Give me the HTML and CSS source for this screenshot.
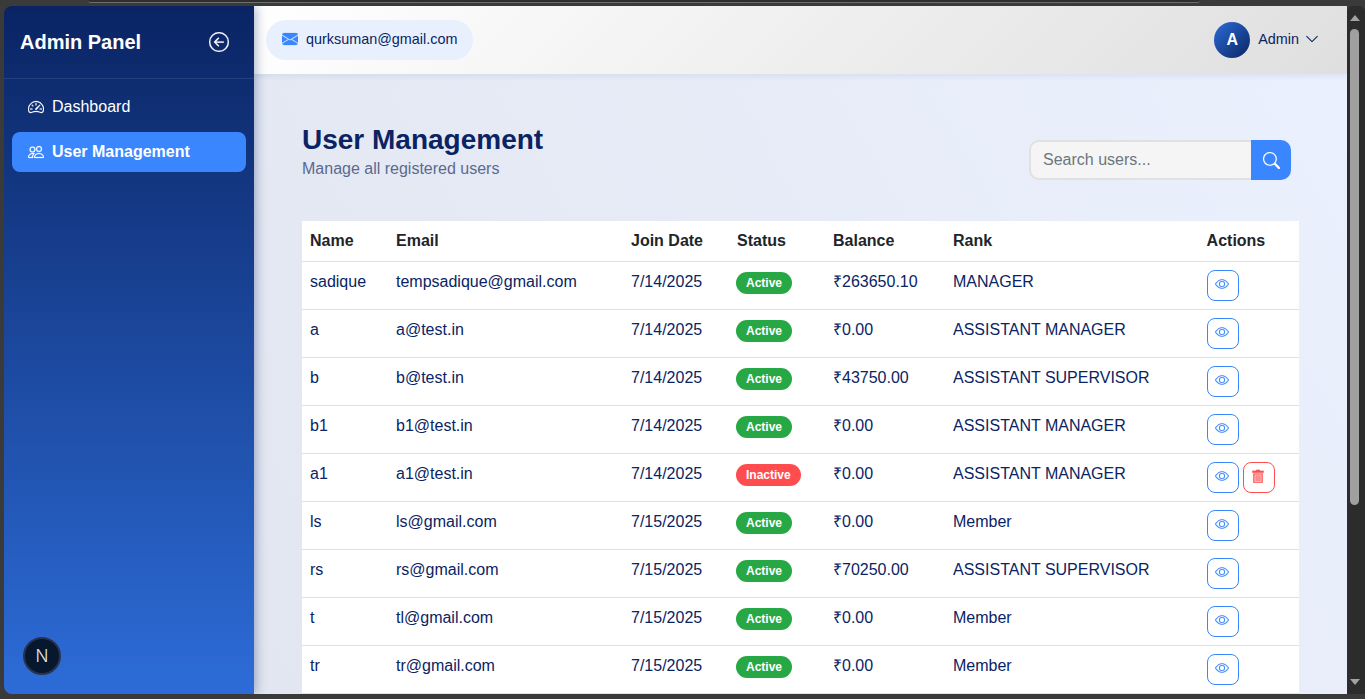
FILE: index.html
```html
<!DOCTYPE html>
<html lang="en">
<head>
    <meta charset="UTF-8">
    <meta name="viewport" content="width=device-width, initial-scale=1.0">
    <title>Admin Panel - User Management</title>
    <link rel="stylesheet" href="styles.css">
</head>
<body>

    <svg class="icon-defs" aria-hidden="true">
        <symbol id="i-back" viewBox="0 0 16 16"><path d="M1 8a7 7 0 1 0 14 0A7 7 0 0 0 1 8m15 0A8 8 0 1 1 0 8a8 8 0 0 1 16 0m-4.5-.5a.5.5 0 0 1 0 1H5.707l2.147 2.146a.5.5 0 0 1-.708.708l-3-3a.5.5 0 0 1 0-.708l3-3a.5.5 0 1 1 .708.708L5.707 7.5z"/></symbol>
        <symbol id="i-gauge" viewBox="0 0 16 16"><path d="M8 4a.5.5 0 0 1 .5.5V6a.5.5 0 0 1-1 0V4.5A.5.5 0 0 1 8 4M3.732 5.732a.5.5 0 0 1 .707 0l.915.914a.5.5 0 1 1-.708.708l-.914-.915a.5.5 0 0 1 0-.707M2 10a.5.5 0 0 1 .5-.5h1.586a.5.5 0 0 1 0 1H2.5A.5.5 0 0 1 2 10m9.5 0a.5.5 0 0 1 .5-.5h1.5a.5.5 0 0 1 0 1H12a.5.5 0 0 1-.5-.5m.754-4.246a.39.39 0 0 0-.527-.02L7.547 9.31a.91.91 0 1 0 1.302 1.258l3.434-4.297a.39.39 0 0 0-.029-.518z"/><path d="M0 10a8 8 0 1 1 15.547 2.661c-.442 1.253-1.845 1.602-2.932 1.25C11.309 13.488 9.475 13 8 13c-1.474 0-3.31.488-4.615.911-1.087.352-2.49.003-2.932-1.25A8 8 0 0 1 0 10m8-7a7 7 0 0 0-6.603 9.329c.203.575.923.876 1.68.63C4.397 12.533 6.358 12 8 12s3.604.532 4.923.96c.757.245 1.477-.056 1.68-.631A7 7 0 0 0 8 3"/></symbol>
        <symbol id="i-people" viewBox="0 0 16 16"><path d="M15 14s1 0 1-1-1-4-5-4-5 3-5 4 1 1 1 1zm-7.978-1L7 12.996c.001-.264.167-1.03.76-1.72C8.312 10.629 9.282 10 11 10c1.717 0 2.687.63 3.24 1.276.593.69.758 1.457.76 1.72l-.008.002-.014.002zM11 7a2 2 0 1 0 0-4 2 2 0 0 0 0 4m3-2a3 3 0 1 1-6 0 3 3 0 0 1 6 0M6.936 9.28a6 6 0 0 0-1.23-.247A7 7 0 0 0 5 9c-4 0-5 3-5 4q0 1 1 1h4.216A2.24 2.24 0 0 1 5 13c0-1.01.377-2.042 1.09-2.904.243-.294.526-.569.846-.816M4.92 10A5.5 5.5 0 0 0 4 13H1c0-.26.164-1.03.76-1.724.545-.636 1.492-1.256 3.16-1.275ZM1.5 5.5a3 3 0 1 1 6 0 3 3 0 0 1-6 0m3-2a2 2 0 1 0 0 4 2 2 0 0 0 0-4"/></symbol>
        <symbol id="i-mail" viewBox="0 0 16 16"><path d="M.05 3.555A2 2 0 0 1 2 2h12a2 2 0 0 1 1.95 1.555L8 8.414zM0 4.697v7.104l5.803-3.558zM6.761 8.83l-6.57 4.027A2 2 0 0 0 2 14h12a2 2 0 0 0 1.808-1.144l-6.57-4.027L8 9.586zm3.436-.586L16 11.801V4.697z"/></symbol>
        <symbol id="i-chevron" viewBox="0 0 16 16"><path d="M1.646 4.646a.5.5 0 0 1 .708 0L8 10.293l5.646-5.647a.5.5 0 0 1 .708.708l-6 6a.5.5 0 0 1-.708 0l-6-6a.5.5 0 0 1 0-.708"/></symbol>
        <symbol id="i-search" viewBox="0 0 16 16"><path d="M11.742 10.344a6.5 6.5 0 1 0-1.397 1.398h-.001q.044.06.098.115l3.85 3.85a1 1 0 0 0 1.415-1.414l-3.85-3.85a1 1 0 0 0-.115-.1zM12 6.5a5.5 5.5 0 1 1-11 0 5.5 5.5 0 0 1 11 0"/></symbol>
        <symbol id="i-eye" viewBox="0 0 16 16"><path d="M16 8s-3-5.5-8-5.5S0 8 0 8s3 5.5 8 5.5S16 8 16 8M1.173 8a13 13 0 0 1 1.66-2.043C4.12 4.668 5.88 3.5 8 3.5s3.879 1.168 5.168 2.457A13 13 0 0 1 14.828 8q-.086.13-.195.288c-.335.48-.83 1.12-1.465 1.755C11.879 11.332 10.119 12.5 8 12.5s-3.879-1.168-5.168-2.457A13 13 0 0 1 1.172 8z"/><path d="M8 5.5a2.5 2.5 0 1 0 0 5 2.5 2.5 0 0 0 0-5M4.5 8a3.5 3.5 0 1 1 7 0 3.5 3.5 0 0 1-7 0"/></symbol>
        <symbol id="i-trash" viewBox="0 0 16 16"><path d="M1.5 2H6V.8h4V2h4.5v2.2h-13z"/><path fill-rule="evenodd" d="M2.6 5h10.8v10.8H2.6zM4 6.2v8.4h8V6.2z"/><path d="M5.2 7h1.2v6.6H5.2zM7.4 7h1.2v6.6H7.4zM9.6 7h1.2v6.6H9.6z"/></symbol>
    </svg>

    <div class="frame-tab"></div>

    <div class="window">
        <div class="app">
            <aside class="sidebar">
                <div class="sidebar-head">
                    <h2>Admin Panel</h2>
                    <button type="button" class="collapse-btn"><svg class="icon"><use href="#i-back"/></svg></button>
                </div>
                <nav class="side-nav">
                    <a href="#" class="side-link"><svg class="icon"><use href="#i-gauge"/></svg>Dashboard</a>
                    <a href="#" class="side-link active"><svg class="icon"><use href="#i-people"/></svg>User Management</a>
                </nav>
                <div class="dev-badge">N</div>
            </aside>

            <div class="content">
                <header class="topbar">
                    <div class="mail-pill"><svg class="icon"><use href="#i-mail"/></svg>qurksuman@gmail.com</div>
                    <div class="profile">
                        <span class="avatar">A</span>
                        <span>Admin</span>
                        <svg class="icon chevron"><use href="#i-chevron"/></svg>
                    </div>
                </header>

                <main class="page">
                    <div class="page-head">
                        <div class="page-title">
                            <h1>User Management</h1>
                            <p>Manage all registered users</p>
                        </div>
                        <form class="search">
                            <input type="text" placeholder="Search users...">
                            <button type="button"><svg class="icon"><use href="#i-search"/></svg></button>
                        </form>
                    </div>

                    <table class="users">
                        <colgroup>
                            <col class="c-name"><col class="c-email"><col class="c-date"><col class="c-status"><col class="c-balance"><col class="c-rank"><col class="c-actions">
                        </colgroup>
                        <thead>
                            <tr><th>Name</th><th>Email</th><th>Join Date</th><th>Status</th><th>Balance</th><th>Rank</th><th>Actions</th></tr>
                        </thead>
                        <tbody>
                            <tr>
                                <td>sadique</td><td>tempsadique@gmail.com</td><td>7/14/2025</td>
                                <td><span class="badge">Active</span></td><td>₹263650.10</td><td>MANAGER</td>
                                <td><div class="actions"><button type="button" class="act"><svg class="icon"><use href="#i-eye"/></svg></button></div></td>
                            </tr>
                            <tr>
                                <td>a</td><td>a@test.in</td><td>7/14/2025</td>
                                <td><span class="badge">Active</span></td><td>₹0.00</td><td>ASSISTANT MANAGER</td>
                                <td><div class="actions"><button type="button" class="act"><svg class="icon"><use href="#i-eye"/></svg></button></div></td>
                            </tr>
                            <tr>
                                <td>b</td><td>b@test.in</td><td>7/14/2025</td>
                                <td><span class="badge">Active</span></td><td>₹43750.00</td><td>ASSISTANT SUPERVISOR</td>
                                <td><div class="actions"><button type="button" class="act"><svg class="icon"><use href="#i-eye"/></svg></button></div></td>
                            </tr>
                            <tr>
                                <td>b1</td><td>b1@test.in</td><td>7/14/2025</td>
                                <td><span class="badge">Active</span></td><td>₹0.00</td><td>ASSISTANT MANAGER</td>
                                <td><div class="actions"><button type="button" class="act"><svg class="icon"><use href="#i-eye"/></svg></button></div></td>
                            </tr>
                            <tr>
                                <td>a1</td><td>a1@test.in</td><td>7/14/2025</td>
                                <td><span class="badge off">Inactive</span></td><td>₹0.00</td><td>ASSISTANT MANAGER</td>
                                <td>
                                    <div class="actions">
                                        <button type="button" class="act"><svg class="icon"><use href="#i-eye"/></svg></button>
                                        <button type="button" class="act del"><svg class="icon"><use href="#i-trash"/></svg></button>
                                    </div>
                                </td>
                            </tr>
                            <tr>
                                <td>ls</td><td>ls@gmail.com</td><td>7/15/2025</td>
                                <td><span class="badge">Active</span></td><td>₹0.00</td><td>Member</td>
                                <td><div class="actions"><button type="button" class="act"><svg class="icon"><use href="#i-eye"/></svg></button></div></td>
                            </tr>
                            <tr>
                                <td>rs</td><td>rs@gmail.com</td><td>7/15/2025</td>
                                <td><span class="badge">Active</span></td><td>₹70250.00</td><td>ASSISTANT SUPERVISOR</td>
                                <td><div class="actions"><button type="button" class="act"><svg class="icon"><use href="#i-eye"/></svg></button></div></td>
                            </tr>
                            <tr>
                                <td>t</td><td>tl@gmail.com</td><td>7/15/2025</td>
                                <td><span class="badge">Active</span></td><td>₹0.00</td><td>Member</td>
                                <td><div class="actions"><button type="button" class="act"><svg class="icon"><use href="#i-eye"/></svg></button></div></td>
                            </tr>
                            <tr>
                                <td>tr</td><td>tr@gmail.com</td><td>7/15/2025</td>
                                <td><span class="badge">Active</span></td><td>₹0.00</td><td>Member</td>
                                <td><div class="actions"><button type="button" class="act"><svg class="icon"><use href="#i-eye"/></svg></button></div></td>
                            </tr>
                        </tbody>
                    </table>
                </main>
            </div>
        </div>

        <div class="scrollbar">
            <span class="arrow up"></span>
            <span class="track"><span class="thumb"></span></span>
            <span class="arrow down"></span>
        </div>
    </div>

</body>
</html>
```

FILE: styles.css
```css
* {
    box-sizing: border-box;
}
html, body {
    height: 100%;
}
body {
    margin: 0;
    padding: 6px 0 5px 4px;
    overflow: hidden;
    background: #3a3a3a;
    font-family: "Liberation Sans", Arial, sans-serif;
    font-size: 16px;
    color: #0a2463;
}
.icon-defs {
    position: absolute;
    width: 0;
    height: 0;
}
.icon {
    width: 16px;
    height: 16px;
    fill: currentColor;
    stroke: currentColor;
    stroke-width: 0.2;
    flex-shrink: 0;
}
.frame-tab {
    position: absolute;
    top: 0;
    left: 88px;
    width: 1112px;
    height: 3px;
    border-bottom: 1px solid #6e6e6e;
    border-radius: 0 0 4px 4px;
    background: #2e2e2e;
}
.window {
    display: flex;
    height: 100%;
}
.app {
    flex: 1;
    display: flex;
    min-width: 0;
    overflow: hidden;
    border-top-left-radius: 8px;
    border-bottom-left-radius: 8px;
}

/* sidebar */
.sidebar {
    position: relative;
    width: 250px;
    flex-shrink: 0;
    z-index: 2;
    background: linear-gradient(180deg, #0a2463 0%, #2d6cd8 100%);
    box-shadow: 2px 0 10px rgba(10, 36, 99, 0.35);
    color: #fff;
}
.sidebar-head {
    display: flex;
    align-items: center;
    justify-content: space-between;
    height: 73px;
    padding: 0 25px 0 16px;
    border-bottom: 1px solid rgba(255, 255, 255, 0.1);
}
.sidebar-head h2 {
    margin: 0;
    font-size: 20px;
    font-weight: bold;
}
.collapse-btn {
    display: flex;
    padding: 0;
    border: 0;
    background: none;
    color: #fff;
}
.collapse-btn .icon {
    width: 20px;
    height: 20px;
}
.side-nav {
    display: flex;
    flex-direction: column;
    gap: 5px;
    padding: 8px 8px;
}
.side-link {
    display: flex;
    align-items: center;
    gap: 8px;
    height: 40px;
    padding: 0 16px;
    border-radius: 8px;
    color: #fff;
    text-decoration: none;
}
.side-link.active {
    background: #3a86ff;
    font-weight: bold;
}
.dev-badge {
    position: absolute;
    left: 19px;
    bottom: 19px;
    width: 38px;
    height: 38px;
    display: flex;
    align-items: center;
    justify-content: center;
    border: 2px solid #27344d;
    border-radius: 50%;
    background: #07172e;
    color: #e8e8e8;
    font-family: Inter, "Liberation Sans", sans-serif;
    font-size: 17px;
    font-weight: 300;
}

/* top bar */
.content {
    flex: 1;
    min-width: 0;
    display: flex;
    flex-direction: column;
}
.topbar {
    position: relative;
    z-index: 1;
    display: flex;
    align-items: center;
    justify-content: space-between;
    height: 68px;
    flex-shrink: 0;
    padding: 0 28px 0 12px;
    background: linear-gradient(135deg, #ffffff 0%, #dfdfdf 100%);
    box-shadow: 0 2px 6px rgba(10, 36, 99, 0.08);
}
.mail-pill {
    display: flex;
    align-items: center;
    gap: 8px;
    height: 40px;
    padding: 0 16px 2px;
    border-radius: 20px;
    background: #e8f0fe;
    font-size: 14.4px;
}
.mail-pill .icon {
    color: #3a86ff;
}
.profile {
    display: flex;
    align-items: center;
    gap: 8px;
    font-size: 14.4px;
}
.avatar {
    width: 36px;
    height: 36px;
    display: flex;
    align-items: center;
    justify-content: center;
    border-radius: 50%;
    background: linear-gradient(135deg, #2d6cd8, #0a2463);
    color: #fff;
    font-size: 16px;
    font-weight: bold;
}
.profile span:nth-child(2) {
    margin-bottom: 2px;
}
.chevron {
    width: 14px;
    height: 14px;
    margin: 0 0 2px -2px;
}

/* page */
.page {
    flex: 1;
    min-height: 0;
    overflow: hidden;
    padding: 48px 48px 0;
    background: linear-gradient(60deg, #e2e6f0 0%, #eaf0fd 100%);
}
.page-head {
    display: flex;
    align-items: flex-end;
    justify-content: space-between;
    height: 58px;
    margin-bottom: 41px;
    padding-right: 8px;
}
.page-title {
    align-self: flex-start;
    padding-top: 2px;
}
.page-head h1 {
    margin: 0 0 4px;
    font-size: 28px;
    line-height: 32px;
    font-weight: bold;
}
.page-head p {
    margin: 0;
    line-height: 18px;
    color: #5a6a90;
}
.search {
    display: flex;
    width: 262px;
    height: 40px;
}
.search input {
    flex: 1;
    min-width: 0;
    padding: 0 12px;
    border: 2px solid #e0e0e0;
    border-right: 0;
    border-radius: 10px 0 0 10px;
    background: #f5f5f5;
    font: inherit;
    color: #333;
    outline: none;
}
.search input::placeholder {
    color: #6c757d;
    opacity: 1;
}
.search button {
    width: 40px;
    display: flex;
    align-items: center;
    justify-content: center;
    padding: 0;
    border: 0;
    border-radius: 0 10px 10px 0;
    background: #3a86ff;
    color: #fff;
}
.search button .icon {
    width: 17px;
    height: 17px;
}

/* table */
.users {
    width: 997px;
    table-layout: fixed;
    border-collapse: collapse;
    background: #fff;
}
.c-name { width: 86px; }
.c-email { width: 235px; }
.c-date { width: 106px; }
.c-status { width: 96px; }
.c-balance { width: 120px; }
.c-rank { width: 253.6px; }
.c-actions { width: 100.4px; }
.users th,
.users td {
    padding: 8px;
    line-height: 24px;
    text-align: left;
    vertical-align: top;
    border-bottom: 1px solid #dee2e6;
}
.users th {
    font-weight: bold;
    color: #212529;
}
.badge {
    display: inline-block;
    height: 22px;
    padding: 0 10px;
    margin: 2px 0 0 -1px;
    border-radius: 11px;
    background: #28a745;
    color: #fff;
    font-size: 12px;
    font-weight: bold;
    line-height: 22px;
    vertical-align: top;
}
.badge.off {
    background: #ff4d4f;
}
.actions {
    display: flex;
    gap: 4px;
}
.act {
    width: 32px;
    height: 31px;
    display: flex;
    align-items: center;
    justify-content: center;
    padding: 0 1px 3px 0;
    border: 1px solid #3a86ff;
    border-radius: 8px;
    background: #fff;
    color: #3a86ff;
}
.act .icon {
    width: 14px;
    height: 14px;
}
.act.del {
    border-color: #ff4d4f;
    color: #ff4d4f;
}

/* browser scrollbar */
.scrollbar {
    width: 18px;
    flex-shrink: 0;
    display: flex;
    flex-direction: column;
    border-radius: 6px 6px 0 0;
    background: #2c2c2c;
}
.arrow {
    height: 17px;
    display: block;
    flex-shrink: 0;
    position: relative;
}
.arrow::after {
    content: "";
    position: absolute;
    left: 3px;
    border-left: 5px solid transparent;
    border-right: 5px solid transparent;
}
.arrow.up::after {
    top: 9px;
    border-bottom: 6px solid #a3a3a3;
}
.arrow.down::after {
    top: 2px;
    border-top: 6px solid #a3a3a3;
}
.track {
    flex: 1;
    padding: 6px 6px 0 3px;
}
.thumb {
    display: block;
    height: 476px;
    border-radius: 5px;
    background: #a0a0a0;
}
```
